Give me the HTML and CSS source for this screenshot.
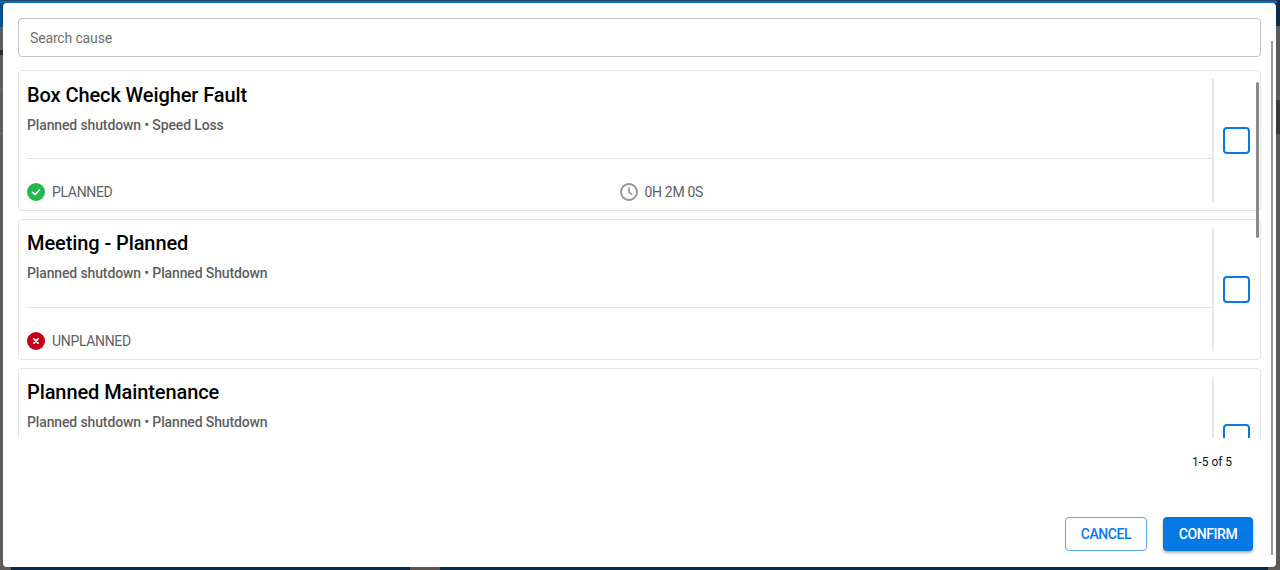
FILE: index.html
```html
<!DOCTYPE html>
<html lang="en">
<head>
<meta charset="utf-8">
<title>Select cause</title>
<link rel="stylesheet" href="styles.css">
</head>
<body>
<div class="backdrop">
  <div class="modal">
    <div class="search"><span class="search-text">Search cause</span></div>
    <div class="list-wrap">
      <div class="list">
        <article class="card">
          <div class="card-main">
            <h2 class="card-title">Box Check Weigher Fault</h2>
            <p class="card-sub">Planned shutdown • Speed Loss</p>
            <hr class="card-rule">
            <div class="meta">
              <div class="meta-item">
                <svg class="ico" viewBox="0 0 18 18"><circle cx="9" cy="9" r="9" fill="#22b84c"/><path d="M5.6 9.3l2.4 2.3 4.4-4.6" fill="none" stroke="#fff" stroke-width="1.7" stroke-linecap="round" stroke-linejoin="round"/></svg>
                <span>PLANNED</span>
              </div>
              <div class="meta-item">
                <svg class="ico" viewBox="0 0 18 18"><circle cx="9" cy="9" r="8" fill="none" stroke="#949494" stroke-width="1.9"/><path d="M9 4.6v4.7l3.4 2.2" fill="none" stroke="#949494" stroke-width="1.6"/></svg>
                <span>0H 2M 0S</span>
              </div>
            </div>
          </div>
          <div class="card-side"><span class="check"></span></div>
        </article>
        <article class="card">
          <div class="card-main">
            <h2 class="card-title">Meeting - Planned</h2>
            <p class="card-sub">Planned shutdown • Planned Shutdown</p>
            <hr class="card-rule">
            <div class="meta">
              <div class="meta-item">
                <svg class="ico" viewBox="0 0 18 18"><circle cx="9" cy="9" r="9" fill="#c4001a"/><path d="M6.9 6.9l4.2 4.2M11.1 6.9l-4.2 4.2" fill="none" stroke="#fff" stroke-width="1.7" stroke-linecap="round"/></svg>
                <span>UNPLANNED</span>
              </div>
            </div>
          </div>
          <div class="card-side"><span class="check"></span></div>
        </article>
        <article class="card">
          <div class="card-main">
            <h2 class="card-title">Planned Maintenance</h2>
            <p class="card-sub">Planned shutdown • Planned Shutdown</p>
            <hr class="card-rule">
            <div class="meta"></div>
          </div>
          <div class="card-side"><span class="check"></span></div>
        </article>
      </div>
      <div class="inner-thumb"></div>
    </div>
    <div class="pager">1-5 of 5</div>
    <div class="actions">
      <button class="btn btn-outline">CANCEL</button>
      <button class="btn btn-solid">CONFIRM</button>
    </div>
    <div class="outer-thumb"></div>
  </div>
</div>
</body>
</html>
```
FILE: styles.css
```css
* { box-sizing: border-box; }
html, body { margin: 0; height: 100%; }
body { font-family: Roboto, "Liberation Sans", sans-serif; overflow: hidden; }
.backdrop { width: 1280px; height: 570px; position: relative; overflow: hidden;
  background:
    linear-gradient(#24466b 0 1px, #0a6fc2 1px) 0 0 / 1277px 3px no-repeat,
    linear-gradient(#0b4f8a 0 27px, #5c5c5c 27px 50px, #2c2c2c 50px 55px, #5c5c5c 55px 89px, #8a6a3a 89px 90px, #5c5c5c 90px 133px, #8a6a3a 133px 134px, #5c5c5c 134px) 0 0 / 4px 570px no-repeat,
    linear-gradient(#0b2a4a 0 26px, #5a5a5a 26px 100px, #3a3a3a 100px 134px, #5a5a5a 134px) 100% 0 / 5px 570px no-repeat,
    linear-gradient(to right, #5c5c5c 0 11px, #0b2a4a 11px 410px, #5c5450 410px 440px, #0b2a4a 440px 1268px, #5a5a5a 1268px) 0 100% / 100% 4px no-repeat,
    #5a5a5a; }
.modal { position: absolute; left: 3px; top: 3px; width: 1273px; height: 564px; background: #fff; border-radius: 4px;
  padding: 15px 15px 0; display: flex; flex-direction: column; }
.search { height: 39px; border: 1px solid #c4c4c4; border-radius: 4px; display: flex; align-items: center; padding-left: 11px; flex: none; }
.search-text { font-size: 14px; color: #6f6f6f; letter-spacing: -.15px; }
.list-wrap { position: relative; margin-top: 13px; height: 368px; overflow: hidden; flex: none; }
.list { display: flex; flex-direction: column; gap: 8px; }
.card { height: 140.75px; flex: none; border: 1px solid #e4e4e4; border-radius: 4px; display: flex; padding: 8px 0 8px 8px; }
.card-main { flex: 1; min-width: 0; display: flex; flex-direction: column; padding-top: .5px; }
.card-title { margin: 0; font-size: 20px; font-weight: 500; line-height: 30px; color: #000; height: 30px; letter-spacing: -.09px; }
.card-sub { margin: 7px 0 0; font-size: 14px; font-weight: 500; line-height: 16px; color: #5f5f5f; letter-spacing: -.13px; }
.card-rule { margin: 25.5px 0 0; border: 0; border-top: 1px solid #e4e4e4; width: 100%; }
.meta { display: grid; grid-template-columns: 1fr 1fr; margin-top: 24px; }
.meta-item { display: flex; align-items: center; gap: 7px; font-size: 14px; color: #5f5f5f; height: 18px; letter-spacing: -.33px; }
.ico { width: 18px; height: 18px; flex: none; }
.card-side { width: 48px; flex: none; border-left: 2px solid #e8e8e8; display: flex; align-items: center; justify-content: center; }
.check { width: 27px; height: 27px; border: 2px solid #0a7ae2; border-radius: 4px; display: block; margin-left: -1px; }
.inner-thumb { position: absolute; right: 2px; top: 12px; width: 3px; height: 156px; background: #8a8a8a; border-radius: 2px; }
.outer-thumb { position: absolute; right: 3px; top: 38px; width: 2px; height: 514px; background: #9a9a9a; }
.pager { margin-top: 16px; text-align: right; font-size: 12px; line-height: 16px; color: #111; padding-right: 29px; letter-spacing: -.05px; }
.actions { display: flex; justify-content: flex-end; gap: 16px; margin-top: 47px; padding-right: 8px; }
.btn { height: 34px; border-radius: 4px; font: 500 14px Roboto, sans-serif; letter-spacing: -.4px; }
.btn-outline { width: 82px; background: #fff; color: #0a7ae2; border: 1px solid #5aa7ec; }
.btn-solid { width: 90px; background: #0479e3; color: #fff; border: 0; box-shadow: 0 2px 3px rgba(0,0,0,.3); }
```
